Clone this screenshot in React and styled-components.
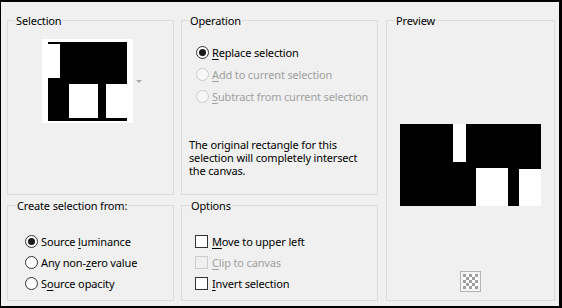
import React from 'react';
import styled, { createGlobalStyle } from 'styled-components';

const Global = createGlobalStyle`
  html, body { margin: 0; padding: 0; background: #f0f0f0; }
`;

const Frame = styled.div`
  box-sizing: border-box;
  width: 562px;
  height: 308px;
  border-style: solid;
  border-color: #000;
  border-width: 2px 3px 2px 1px;
  background: #f0f0f0;
  padding: 18px 0 0 6px;
  display: grid;
  grid-template-columns: 167px 197px 170px;
  grid-template-rows: 175px 96px;
  column-gap: 7px;
  row-gap: 10px;
  font-family: "Noto Sans", "Open Sans", sans-serif;
  font-size: 11px;
  letter-spacing: -0.15px;
  color: #000;
`;

const Group = styled.div`
  position: relative;
  box-sizing: border-box;
  border: 1px solid #dcdcdc;
  display: flex;
  flex-direction: ${p => (p.$row ? 'row' : 'column')};
  align-items: ${p => p.$align || 'stretch'};
  padding: ${p => p.$pad || '0'};
  margin-left: ${p => p.$shift || 0}px;
  grid-row: ${p => (p.$span ? '1 / span 2' : 'auto')};
  grid-column: ${p => (p.$span ? '3' : 'auto')};
`;

const Legend = styled.span`
  position: absolute;
  top: -7px;
  left: ${p => p.$left}px;
  padding: 0 1px;
  background: #f0f0f0;
  line-height: 14px;
  white-space: nowrap;
`;

const Thumb = styled.div`
  box-sizing: border-box;
  width: 91px;
  height: 84px;
  background: #fff;
  padding: 3px 0 0 6px;
  flex: none;
`;

const DropArrow = styled.svg`
  margin: 41px 0 0 3px;
  flex: none;
`;

const Choice = styled.div`
  display: flex;
  align-items: center;
  height: ${p => p.$h}px;
  gap: ${p => p.$gap}px;
  white-space: nowrap;
  color: ${p => (p.$disabled ? '#a0a0a0' : '#000')};
`;

const RadioMark = styled.span`
  box-sizing: border-box;
  width: 13px;
  height: 13px;
  flex: none;
  border-radius: 50%;
  border: 1px solid ${p => (p.$disabled ? '#cccccc' : '#333')};
  background: ${p => (p.$disabled ? '#f7f7f7' : '#fff')};
  display: flex;
  align-items: center;
  justify-content: center;
  &::after {
    content: '';
    display: ${p => (p.$checked ? 'block' : 'none')};
    width: 7px;
    height: 7px;
    border-radius: 50%;
    background: #1a1a1a;
  }
`;

const CheckMark = styled.span`
  box-sizing: border-box;
  width: 13px;
  height: 13px;
  flex: none;
  border: 1px solid ${p => (p.$disabled ? '#cccccc' : '#333')};
  background: ${p => (p.$disabled ? '#f0f0f0' : '#fff')};
`;

const Key = styled.span`
  text-decoration: underline;
  text-underline-offset: 2px;
`;

const Note = styled.p`
  margin: 31px 0 0 0;
  line-height: 13px;
  white-space: nowrap;
`;

const PreviewPic = styled.svg`
  margin-top: 103px;
  flex: none;
  display: block;
`;

const Checker = styled.svg`
  margin-top: auto;
  margin-bottom: 8px;
  flex: none;
  display: block;
`;

const OptList = styled.div`
  display: flex;
  flex-direction: column;
  padding-left: ${p => p.$indent || 0}px;
`;

const Radio = ({ checked, disabled, h = 22, children }) => (
  <Choice $h={h} $gap={3} $disabled={disabled}>
    <RadioMark $checked={checked} $disabled={disabled} />
    <span>{children}</span>
  </Choice>
);

const Check = ({ disabled, children }) => (
  <Choice $h={21} $gap={4} $disabled={disabled}>
    <CheckMark $disabled={disabled} />
    <span>{children}</span>
  </Choice>
);

export default function App() {
  return (
    <>
      <Global />
      <Frame>
        <Group $row $align="flex-start" $pad="18px 0 0 34px">
          <Legend $left={7}>Selection</Legend>
          <Thumb>
            <svg width="79" height="79" viewBox="0 0 79 79" style={{ display: 'block' }}>
              <rect x="0" y="0" width="79" height="79" fill="#000" />
              <rect x="0" y="2" width="12" height="34" fill="#fff" />
              <rect x="21" y="42" width="29" height="34" fill="#fff" />
              <rect x="58" y="42" width="21" height="34" fill="#fff" />
            </svg>
          </Thumb>
          <DropArrow width="6" height="4" viewBox="0 0 6 4">
            <path d="M0 0 L6 0 L3 3 Z" fill="#a8a8a8" />
          </DropArrow>
        </Group>

        <Group $pad="20px 0 0 7px">
          <Legend $left={7}>Operation</Legend>
          <OptList $indent={7}>
            <Radio checked><Key>R</Key>eplace selection</Radio>
            <Radio disabled><Key>A</Key>dd to current selection</Radio>
            <Radio disabled><Key>S</Key>ubtract from current selection</Radio>
          </OptList>
          <Note>
            The original rectangle for this<br />
            selection will completely intersect<br />
            the canvas.
          </Note>
        </Group>

        <Group $span $shift={1} $align="center">
          <Legend $left={8}>Preview</Legend>
          <PreviewPic width="141" height="82" viewBox="0 0 141 82">
            <rect x="0" y="0" width="141" height="82" fill="#000" />
            <rect x="53" y="0" width="13" height="38" fill="#fff" />
            <rect x="76" y="44" width="32" height="38" fill="#fff" />
            <rect x="119" y="45" width="22" height="37" fill="#fff" />
          </PreviewPic>
          <Checker width="21" height="21" viewBox="0 0 21 21">
            <rect x="0.5" y="0.5" width="20" height="20" fill="#f4f4f4" stroke="#b4b4b4" />
            <rect x="3" y="3" width="15" height="15" fill="#fff" />
            {[0, 1, 2, 3, 4].map(r =>
              [0, 1, 2, 3, 4].map(c =>
                (r + c) % 2 === 0 ? (
                  <rect key={`${r}-${c}`} x={3 + c * 3} y={3 + r * 3} width="3" height="3" fill="#a0a0a0" />
                ) : null
              )
            )}
          </Checker>
        </Group>

        <Group $pad="25px 0 0 17px">
          <Legend $left={8}>Create selection from:</Legend>
          <Radio checked h={21}>Source <Key>l</Key>uminance</Radio>
          <Radio h={21}>Any non-<Key>z</Key>ero value</Radio>
          <Radio h={21}>S<Key>o</Key>urce opacity</Radio>
        </Group>

        <Group $pad="25px 0 0 13px">
          <Legend $left={8}>Options</Legend>
          <Check><Key>M</Key>ove to upper left</Check>
          <Check disabled><Key>C</Key>lip to canvas</Check>
          <Check><Key>I</Key>nvert selection</Check>
        </Group>
      </Frame>
    </>
  );
}
